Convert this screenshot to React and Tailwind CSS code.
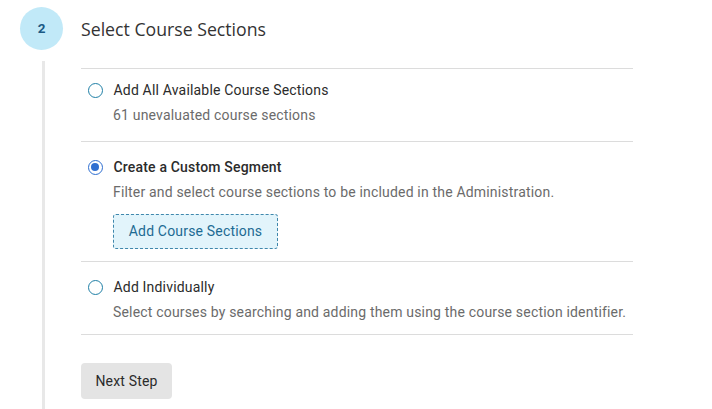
import React from "react";

function Radio({ checked }) {
  return checked ? (
    <span className="ml-[6.5px] flex h-[15px] w-[15px] shrink-0 items-center justify-center rounded-full border-[1.5px] border-[#2f6fd1]">
      <span className="h-[8px] w-[8px] rounded-full bg-[#2f6fd1]" />
    </span>
  ) : (
    <span className="ml-[6.5px] block h-[15px] w-[15px] shrink-0 rounded-full border-[1.5px] border-[#1f7fa6]" />
  );
}

function Option({ checked, label, sub, className, children }) {
  return (
    <div className={"border-b border-[#dcdcdc] " + className}>
      <div className="flex h-[20px] items-center">
        <Radio checked={checked} />
        <span className={"ml-[11px] text-[14px] leading-[20px] tracking-[0.18px] text-[#2b2b2b] " + (checked ? "font-medium" : "")}>
          {label}
        </span>
      </div>
      <div className="ml-[32px] mt-[5px] text-[14px] leading-[20px] tracking-[0.18px] text-[#6b6b6b]">{sub}</div>
      {children}
    </div>
  );
}

export default function App() {
  return (
    <div className="relative h-[409px] w-[712px] overflow-hidden bg-white font-['Roboto',sans-serif]">
      <div className="flex items-center pl-[20px] pt-[7px]">
        <div className="flex h-[43px] w-[43px] items-center justify-center rounded-full bg-[#c1e9f8] text-[13.5px] font-bold text-[#1b5a85]">
          2
        </div>
        <h2 className="ml-[18px] font-['Open_Sans',sans-serif] text-[17.7px] font-medium leading-[24px] text-[#333333]">
          Select Course Sections
        </h2>
      </div>
      <div className="mt-[11px] flex pl-[42px]">
        <div className="w-[3px] self-stretch bg-[#e8e8e8]" />
        <div className="ml-[36px] w-[552px] pt-[7px]">
          <div className="border-t border-[#dcdcdc]" />
          <Option
            label="Add All Available Course Sections"
            sub="61 unevaluated course sections"
            className="pt-[11px] pb-[16px]"
          />
          <Option
            checked
            label="Create a Custom Segment"
            sub="Filter and select course sections to be included in the Administration."
            className="pt-[15px] pb-[12px]"
          >
            <button className="ml-[32px] mt-[12px] flex h-[35px] w-[165px] items-center justify-center rounded-[3px] border border-dashed border-[#3f87ac] bg-[#e2f4fb] text-[14px] tracking-[0.18px] text-[#1d6b93]">
              Add Course Sections
            </button>
          </Option>
          <Option
            label="Add Individually"
            sub="Select courses by searching and adding them using the course section identifier."
            className="pt-[15px] pb-[12px]"
          />
          <button className="mb-[10px] mt-[28px] flex h-[36px] w-[91px] items-center justify-center rounded-[4px] bg-[#e4e4e4] text-[14px] tracking-[0.18px] text-[#2b2b2b]">
            Next Step
          </button>
        </div>
      </div>
    </div>
  );
}
